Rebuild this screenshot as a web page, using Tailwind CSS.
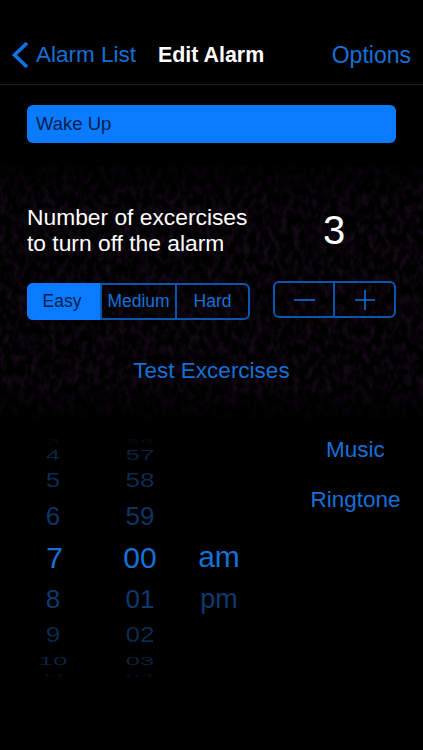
<!DOCTYPE html>
<html lang="en">
<head>
    <meta charset="UTF-8">
    <meta name="viewport" content="width=device-width, initial-scale=1.0">
    <title>Edit Alarm</title>
    <script src="https://cdn.jsdelivr.net/npm/@tailwindcss/browser@4"></script>
</head>
<body class="bg-black">
<div class="relative w-[423px] h-[750px] overflow-hidden bg-black font-['Liberation_Sans',Arial,sans-serif]">

    <!-- faint mottled texture behind the form -->
    <svg aria-hidden="true" class="absolute left-0 top-[165px]" width="423" height="255" viewBox="0 0 423 255">
        <defs>
            <filter id="mottle" x="0" y="0" width="100%" height="100%" color-interpolation-filters="sRGB">
                <feTurbulence type="fractalNoise" baseFrequency="0.16 0.1" numOctaves="2" seed="7"/>
                <feColorMatrix type="matrix" values="0 0 0 0 0.085  0 0 0 0 0.035  0 0 0 0 0.095  2.6 0 0 0 -1.05"/>
                <feGaussianBlur stdDeviation="0.7"/>
            </filter>
            <linearGradient id="fade" x1="0" y1="0" x2="0" y2="1">
                <stop offset="0" stop-color="#fff" stop-opacity="0.3"/>
                <stop offset="0.15" stop-color="#fff"/>
                <stop offset="0.85" stop-color="#fff"/>
                <stop offset="1" stop-color="#fff" stop-opacity="0.15"/>
            </linearGradient>
            <mask id="fademask"><rect width="423" height="255" fill="url(#fade)"/></mask>
        </defs>
        <g mask="url(#fademask)"><rect width="423" height="255" filter="url(#mottle)"/></g>
    </svg>

    <div class="relative">
        <!-- nav bar -->
        <div class="h-[85px] pt-[40px] border-b border-[#1c1c1c] flex items-start justify-between pl-[11px] pr-[12px] text-[#1570d8]">
            <div class="flex items-center h-[30px] w-[125px]">
                <svg width="19" height="28" viewBox="0 0 19 28" fill="none" class="shrink-0">
                    <path d="M16 2 L3.5 14 L16 26" stroke="#0f72e6" stroke-width="3.6"/>
                </svg>
                <span class="ml-[6px] text-[22.5px] whitespace-nowrap">Alarm List</span>
            </div>
            <div class="h-[30px] leading-[30px] ml-[22px] text-[21.4px] font-bold text-white whitespace-nowrap">Edit Alarm</div>
            <div class="h-[30px] leading-[30px] ml-auto text-[23px] whitespace-nowrap">Options</div>
        </div>

        <!-- alarm name -->
        <div class="mt-[20px] mx-[27px] h-[38px] w-[369px] rounded-[6px] bg-[#0a7bff] pl-[9px] leading-[38px] text-[18.5px] text-[#04204a]">Wake Up</div>

        <!-- exercise count -->
        <div class="mt-[60px] ml-[27px] flex items-center h-[54px]">
            <div class="w-[285px] text-[22.8px] leading-[26px] text-white whitespace-nowrap">Number of excercises<br>to turn off the alarm</div>
            <div class="w-[44px] text-center text-[40px] leading-[54px] text-white">3</div>
        </div>

        <!-- difficulty and stepper -->
        <div class="mt-[25px] ml-[27px] flex items-start">
            <div class="mt-[1px] flex w-[223px] h-[37px] rounded-[6px] border-2 border-[#0a55ae] text-[17.5px] leading-[33px] text-center">
                <div class="-ml-[2px] -my-[2px] w-[73px] pr-[3px] rounded-l-[6px] bg-[#0a7bff] leading-[37px] text-[#04204a]">Easy</div>
                <div class="w-[75px] border-l-2 border-[#0a55ae] text-[#1570d8] whitespace-nowrap">Medium</div>
                <div class="flex-1 border-l-2 border-[#0a55ae] text-[#1570d8]">Hard</div>
            </div>
            <div class="-mt-[1px] ml-[23px] flex w-[123px] h-[37px] rounded-[6px] border-2 border-[#0a55ae]">
                <div class="w-[58px] flex items-center justify-center">
                    <svg width="21" height="20" viewBox="0 0 21 20"><path d="M0 10H21" stroke="#1570d8" stroke-width="1.6"/></svg>
                </div>
                <div class="flex-1 border-l-2 border-[#0a55ae] flex items-center justify-center">
                    <svg width="20" height="20" viewBox="0 0 20 20"><path d="M0 10H20M10 0V20" stroke="#1570d8" stroke-width="1.6"/></svg>
                </div>
            </div>
        </div>

        <div class="mt-[36px] text-center text-[22.5px] leading-[30px] text-[#1570d8]">Test Excercises</div>

        <!-- time picker and sound links -->
        <div class="mt-[51px] flex items-start">
            <div class="w-[106px] flex flex-col items-center text-[26px] tabular-nums overflow-hidden">
                <div class="h-[8px] leading-[8px] scale-y-20 text-[#050f1c]">3</div>
                <div class="h-[20px] leading-[20px] scale-y-55 text-[#0a2340]">4</div>
                <div class="h-[30px] leading-[30px] scale-y-80 text-[#0b2d55]">5</div>
                <div class="h-[42px] leading-[42px] text-[#0c3566]">6</div>
                <div class="h-[42px] leading-[42px] ml-[3px] text-[30px] text-[#1570d8]">7</div>
                <div class="h-[40px] leading-[40px] text-[#0c3a70]">8</div>
                <div class="h-[30px] leading-[30px] scale-y-85 text-[#0b2c52]">9</div>
                <div class="h-[24px] leading-[24px] scale-y-45 text-[#0a2340]">10</div>
                <div class="h-[6px] leading-[6px] scale-y-15 text-[#050f1c]">11</div>
            </div>
            <div class="w-[68px] flex flex-col items-center text-[26px] tabular-nums overflow-hidden">
                <div class="h-[8px] leading-[8px] scale-y-20 text-[#050f1c]">56</div>
                <div class="h-[20px] leading-[20px] scale-y-55 text-[#0a2340]">57</div>
                <div class="h-[30px] leading-[30px] scale-y-80 text-[#0b2d55]">58</div>
                <div class="h-[42px] leading-[42px] text-[#0c3566]">59</div>
                <div class="h-[42px] leading-[42px] text-[30px] text-[#1570d8]">00</div>
                <div class="h-[40px] leading-[40px] text-[#0c3a70]">01</div>
                <div class="h-[30px] leading-[30px] scale-y-85 text-[#0b2c52]">02</div>
                <div class="h-[24px] leading-[24px] scale-y-45 text-[#0a2340]">03</div>
                <div class="h-[6px] leading-[6px] scale-y-15 text-[#050f1c]">04</div>
            </div>
            <div class="w-[90px] mt-[101px] flex flex-col items-center">
                <div class="h-[42px] leading-[38px] text-[30px] text-[#1570d8]">am</div>
                <div class="h-[40px] leading-[38px] text-[27px] text-[#0c3a70]">pm</div>
            </div>
            <div class="flex-1 -mt-[2px] pl-[24px] flex flex-col items-center text-[22.5px] leading-[30px] text-[#1570d8]">
                <div>Music</div>
                <div class="mt-[20px]">Ringtone</div>
            </div>
        </div>
    </div>
</div>
</body>
</html>
